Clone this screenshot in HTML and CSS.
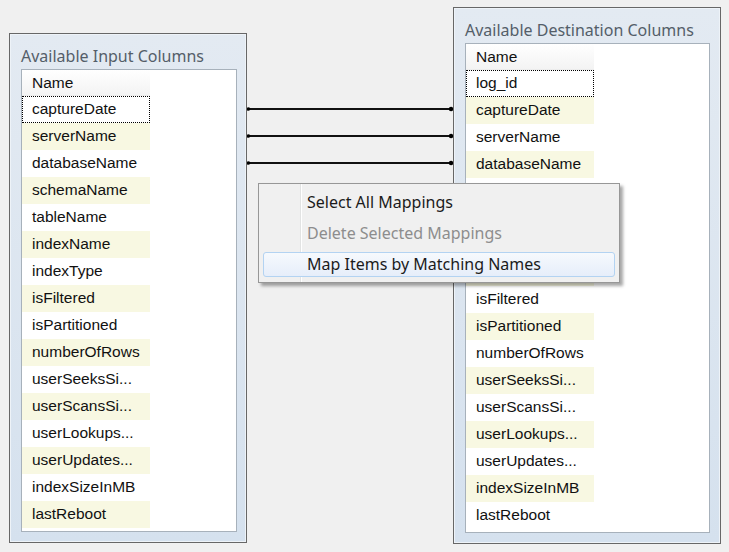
FILE: index.html
```html
<!DOCTYPE html>
<html>
<head>
<meta charset="utf-8">
<link rel="stylesheet" href="styles.css">
</head>
<body>
<div class="stage">
  <section class="panel panel-in">
    <div class="panel-title">Available Input Columns</div>
    <div class="grid">
      <div class="hdr"><div class="hcell">Name</div></div>
      <div class="row"><div class="cell focus">captureDate</div></div>
      <div class="row"><div class="cell">serverName</div></div>
      <div class="row"><div class="cell">databaseName</div></div>
      <div class="row"><div class="cell">schemaName</div></div>
      <div class="row"><div class="cell">tableName</div></div>
      <div class="row"><div class="cell">indexName</div></div>
      <div class="row"><div class="cell">indexType</div></div>
      <div class="row"><div class="cell">isFiltered</div></div>
      <div class="row"><div class="cell">isPartitioned</div></div>
      <div class="row"><div class="cell">numberOfRows</div></div>
      <div class="row"><div class="cell">userSeeksSi...</div></div>
      <div class="row"><div class="cell">userScansSi...</div></div>
      <div class="row"><div class="cell">userLookups...</div></div>
      <div class="row"><div class="cell">userUpdates...</div></div>
      <div class="row"><div class="cell">indexSizeInMB</div></div>
      <div class="row"><div class="cell">lastReboot</div></div>
    </div>
  </section>

  <div class="links">
    <svg width="206" height="180" viewBox="0 0 206 180">
      <g stroke="#111" stroke-width="2">
        <line x1="1" y1="109" x2="204" y2="109"/>
        <line x1="1" y1="136" x2="204" y2="136"/>
        <line x1="1" y1="163" x2="204" y2="163"/>
      </g>
      <g fill="#000">
        <circle cx="1.5" cy="109" r="1.8"/>
        <circle cx="1.5" cy="136" r="1.8"/>
        <circle cx="1.5" cy="163" r="1.8"/>
        <circle cx="204" cy="109" r="2.2"/>
        <circle cx="204" cy="136" r="2.2"/>
        <circle cx="204" cy="163" r="2.2"/>
      </g>
    </svg>
  </div>

  <section class="panel panel-out">
    <div class="panel-title">Available Destination Columns</div>
    <div class="grid">
      <div class="hdr"><div class="hcell">Name</div></div>
      <div class="row"><div class="cell focus">log_id</div></div>
      <div class="row"><div class="cell">captureDate</div></div>
      <div class="row"><div class="cell">serverName</div></div>
      <div class="row"><div class="cell">databaseName</div></div>
      <div class="row"><div class="cell">schemaName</div></div>
      <div class="row"><div class="cell">tableName</div></div>
      <div class="row"><div class="cell">indexName</div></div>
      <div class="row"><div class="cell">indexType</div></div>
      <div class="row"><div class="cell">isFiltered</div></div>
      <div class="row"><div class="cell">isPartitioned</div></div>
      <div class="row"><div class="cell">numberOfRows</div></div>
      <div class="row"><div class="cell">userSeeksSi...</div></div>
      <div class="row"><div class="cell">userScansSi...</div></div>
      <div class="row"><div class="cell">userLookups...</div></div>
      <div class="row"><div class="cell">userUpdates...</div></div>
      <div class="row"><div class="cell">indexSizeInMB</div></div>
      <div class="row"><div class="cell">lastReboot</div></div>
    </div>
  </section>

  <div class="menu">
    <div class="menu-item">Select All Mappings</div>
    <div class="menu-item disabled">Delete Selected Mappings</div>
    <div class="menu-item hot">Map Items by Matching Names</div>
  </div>
</div>
</body>
</html>
```

FILE: styles.css
```css
html, body {
  margin: 0;
  padding: 0;
  background: #f0f0f0;
}

.stage {
  position: relative;
  display: flex;
  align-items: flex-start;
  padding-left: 9px;
  width: 729px;
  height: 552px;
  box-sizing: border-box;
  overflow: hidden;
}

.panel {
  box-sizing: border-box;
  border: 1px solid #676767;
  background: linear-gradient(#e3eaf2, #d5e1ee);
  box-shadow: inset 0 0 0 1px #eef3f8;
  display: flex;
  flex-direction: column;
}

.panel-in {
  width: 238px;
  height: 510px;
  margin-top: 33px;
  padding: 0 9px 0 11px;
}

.panel-out {
  width: 268px;
  height: 537px;
  margin-top: 7px;
  padding: 0 10px 0 11px;
}

.panel-title {
  height: 35px;
  line-height: 44px;
  font-family: "Noto Sans", "Open Sans", sans-serif;
  font-size: 16px;
  color: #545e69;
  white-space: nowrap;
}

.grid {
  border: 1px solid #a7b1bb;
  background: #fff;
  font-family: "Liberation Sans", Arial, sans-serif;
  font-size: 15.5px;
  color: #111;
  padding-bottom: 3px;
}

.hdr {
  height: 26px;
}

.hcell {
  width: 128px;
  height: 26px;
  box-sizing: border-box;
  padding-left: 10px;
  line-height: 25px;
  background: linear-gradient(#ffffff, #f3f3f3);
  border-bottom: 1px solid #ececec;
}

.row {
  height: 27px;
}

.cell {
  width: 128px;
  height: 27px;
  box-sizing: border-box;
  padding-left: 10px;
  line-height: 26px;
  white-space: nowrap;
  overflow: hidden;
}

.row:nth-child(odd) .cell {
  background: #f8f8e2;
}

.cell.focus {
  border: 1px dotted #000;
  padding-left: 9px;
  line-height: 24px;
}

.links {
  width: 206px;
  flex: none;
}

.links svg {
  display: block;
}

.menu {
  position: absolute;
  left: 258px;
  top: 183px;
  width: 362px;
  height: 100px;
  box-sizing: border-box;
  padding: 6px 4px 8px;
  border: 1px solid #979797;
  background: linear-gradient(90deg, #f0f0f0 0, #f0f0f0 41px, #e2e3e3 41px, #e2e3e3 42px, #ffffff 42px, #ffffff 43px, #f0f0f0 43px);
  box-shadow: 3px 3px 3px rgba(0, 0, 0, 0.35);
  display: flex;
  flex-direction: column;
  gap: 6px;
  font-family: "Noto Sans", "Open Sans", sans-serif;
  font-size: 16px;
  color: #1b1b1b;
}

.menu-item {
  height: 25px;
  line-height: 23px;
  padding-left: 43px;
  box-sizing: border-box;
  border: 1px solid transparent;
  border-radius: 3px;
}

.menu-item.disabled {
  color: #8d8d8d;
}

.menu-item.hot {
  border-color: #b3d3f2;
  background: linear-gradient(#f6f9fd, #e6eefa);
}
```
